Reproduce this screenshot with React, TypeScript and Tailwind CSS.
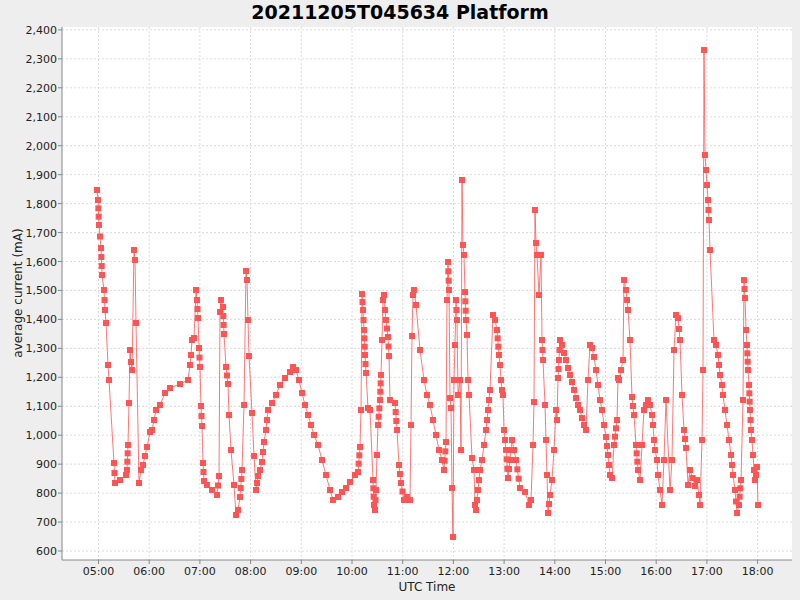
import React from "react";

const K: [number, number][] = [[97,190],[98,200],[99,225],[101,248],[102,275],[104,290],[105,310],[106,323],[108,365],[109,380],[114,463],[115,483],[120,480],[126,475],[127,470],[128,445],[129,403],[130,350],[131,362],[132,370],[134,250],[135,260],[136,323],[139,483],[141,470],[143,465],[147,447],[150,432],[152,430],[156,410],[160,405],[165,393],[170,388],[180,384],[188,380],[190,365],[191,355],[192,340],[194,338],[196,290],[197,300],[198,318],[199,348],[200,367],[201,406],[202,426],[203,463],[204,481],[207,485],[212,490],[217,495],[219,476],[220,312],[221,300],[223,307],[224,334],[226,367],[228,384],[229,415],[231,450],[234,485],[236,515],[238,510],[240,497],[242,470],[244,405],[246,271],[247,280],[248,320],[249,356],[252,413],[254,456],[256,490],[257,483],[258,476],[260,470],[262,462],[264,442],[266,430],[268,410],[272,403],[276,395],[280,385],[285,378],[290,372],[293,367],[296,370],[299,380],[302,393],[305,405],[308,415],[311,425],[314,435],[318,445],[322,460],[326,475],[330,490],[333,500],[338,497],[342,492],[346,488],[350,482],[355,475],[358,472],[360,447],[361,410],[362,294],[363,310],[364,330],[365,355],[366,373],[368,408],[370,410],[373,480],[374,505],[375,510],[376,490],[377,455],[378,425],[380,400],[381,375],[382,340],[383,300],[384,295],[385,310],[386,320],[388,337],[389,356],[390,400],[395,403],[397,430],[399,465],[401,483],[404,500],[407,497],[410,500],[411,425],[412,336],[413,295],[414,290],[416,305],[420,350],[424,380],[427,395],[430,405],[433,420],[436,435],[439,450],[442,460],[444,470],[446,442],[447,300],[448,262],[449,290],[450,398],[451,408],[452,488],[453,537],[454,380],[455,345],[456,300],[457,320],[458,395],[460,380],[461,450],[462,180],[463,245],[464,255],[465,292],[466,320],[467,335],[468,380],[469,395],[472,458],[474,470],[475,505],[476,510],[478,490],[480,470],[482,460],[484,445],[486,430],[488,410],[490,390],[493,315],[495,320],[497,330],[499,355],[500,365],[501,380],[502,390],[503,395],[504,430],[506,450],[508,478],[510,460],[512,440],[514,450],[516,460],[520,488],[525,492],[529,505],[531,500],[533,445],[534,402],[535,210],[536,243],[537,255],[539,295],[541,255],[542,340],[543,360],[545,405],[546,440],[547,475],[548,513],[550,495],[552,480],[554,450],[556,410],[557,420],[558,378],[559,360],[560,340],[562,345],[564,353],[566,360],[568,368],[570,375],[572,382],[574,390],[576,398],[578,405],[580,410],[582,418],[584,425],[586,430],[588,380],[590,345],[592,348],[594,357],[596,370],[598,385],[600,400],[602,410],[604,425],[606,437],[608,455],[610,475],[612,478],[614,445],[617,420],[618,378],[619,380],[623,360],[624,280],[626,290],[628,310],[630,340],[632,397],[634,415],[636,445],[638,470],[640,480],[642,445],[644,410],[646,405],[648,400],[650,405],[652,415],[653,425],[654,440],[655,450],[657,460],[658,475],[660,490],[662,505],[664,460],[666,400],[670,490],[672,460],[674,350],[676,315],[678,318],[680,340],[682,395],[684,430],[686,448],[688,485],[690,470],[695,486],[697,480],[699,495],[700,505],[702,440],[703,370],[704,50],[705,155],[706,170],[707,185],[708,200],[709,220],[710,250],[714,340],[716,345],[718,355],[720,375],[722,385],[723,395],[725,410],[727,425],[729,440],[731,455],[733,475],[735,490],[737,513],[739,505],[741,480],[743,400],[744,280],[745,298],[746,330],[747,345],[748,370],[749,385],[750,410],[751,430],[752,440],[753,455],[754,470],[755,480],[756,475],[757,467],[758,505]];

const pts: [number, number][] = [];
for (let i = 0; i < K.length; i++) {
  if (i > 0) {
    const [x0, y0] = K[i - 1];
    const [x1, y1] = K[i];
    const d = Math.hypot(x1 - x0, y1 - y0);
    if (d < 30) {
      const n = Math.floor(d / 8);
      for (let j = 1; j < n; j++) pts.push([x0 + ((x1 - x0) * j) / n, y0 + ((y1 - y0) * j) / n]);
    }
  }
  pts.push(K[i]);
}

const yTicks = Array.from({ length: 19 }, (_, i) => 600 + i * 100);
const yOf = (v: number) => 551 - ((v - 600) / 100) * 28.95;
const xTicks = Array.from({ length: 14 }, (_, i) => i + 5);
const xOf = (h: number) => 98.5 + (h - 5) * 50.7;
const fmt = (v: number) => v.toLocaleString("en-US");

export default function App() {
  return (
    <div className="w-[800px] h-[600px] bg-[#eeeeee] flex flex-col" style={{ fontFamily: "'DejaVu Sans', sans-serif" }}>
      <div className="h-[22px] flex items-center justify-center text-[19px] font-bold text-black pt-[2px]">20211205T045634 Platform</div>
      <svg width="800" height="578" viewBox="0 22 800 578" className="block">
        <rect x="62" y="27" width="730" height="533" fill="#ffffff" />
        {yTicks.map((v) => (
          <g key={v}>
            <line x1="62" x2="792" y1={yOf(v)} y2={yOf(v)} stroke="#dcdcdc" strokeDasharray="2 2" strokeWidth="1" />
            <line x1="58" x2="62" y1={yOf(v)} y2={yOf(v)} stroke="#888" />
            <text x="57" y={yOf(v) + 4} fontSize="11" textAnchor="end" fill="#222">{fmt(v)}</text>
          </g>
        ))}
        {xTicks.map((h) => (
          <g key={h}>
            <line x1={xOf(h)} x2={xOf(h)} y1="27" y2="560" stroke="#dcdcdc" strokeDasharray="2 2" strokeWidth="1" />
            <line x1={xOf(h)} x2={xOf(h)} y1="560" y2="564" stroke="#888" />
            <text x={xOf(h)} y="575" fontSize="11" textAnchor="middle" fill="#222">{String(h).padStart(2, "0")}:00</text>
          </g>
        ))}
        <line x1="62" x2="62" y1="27" y2="560" stroke="#888" />
        <line x1="62" x2="792" y1="560" y2="560" stroke="#888" />
        <polyline points={K.map((p) => p.join(",")).join(" ")} fill="none" stroke="#ff5555" strokeOpacity="0.8" strokeWidth="1" />
        {pts.map(([x, y], i) => (
          <rect key={i} x={x - 3} y={y - 3} width="6" height="6" fill="#ff5555" />
        ))}
        <text x="427" y="591" fontSize="12" textAnchor="middle" fill="#222">UTC Time</text>
        <text transform="translate(22 293) rotate(-90)" fontSize="12" textAnchor="middle" fill="#222">average current (mA)</text>
      </svg>
    </div>
  );
}
